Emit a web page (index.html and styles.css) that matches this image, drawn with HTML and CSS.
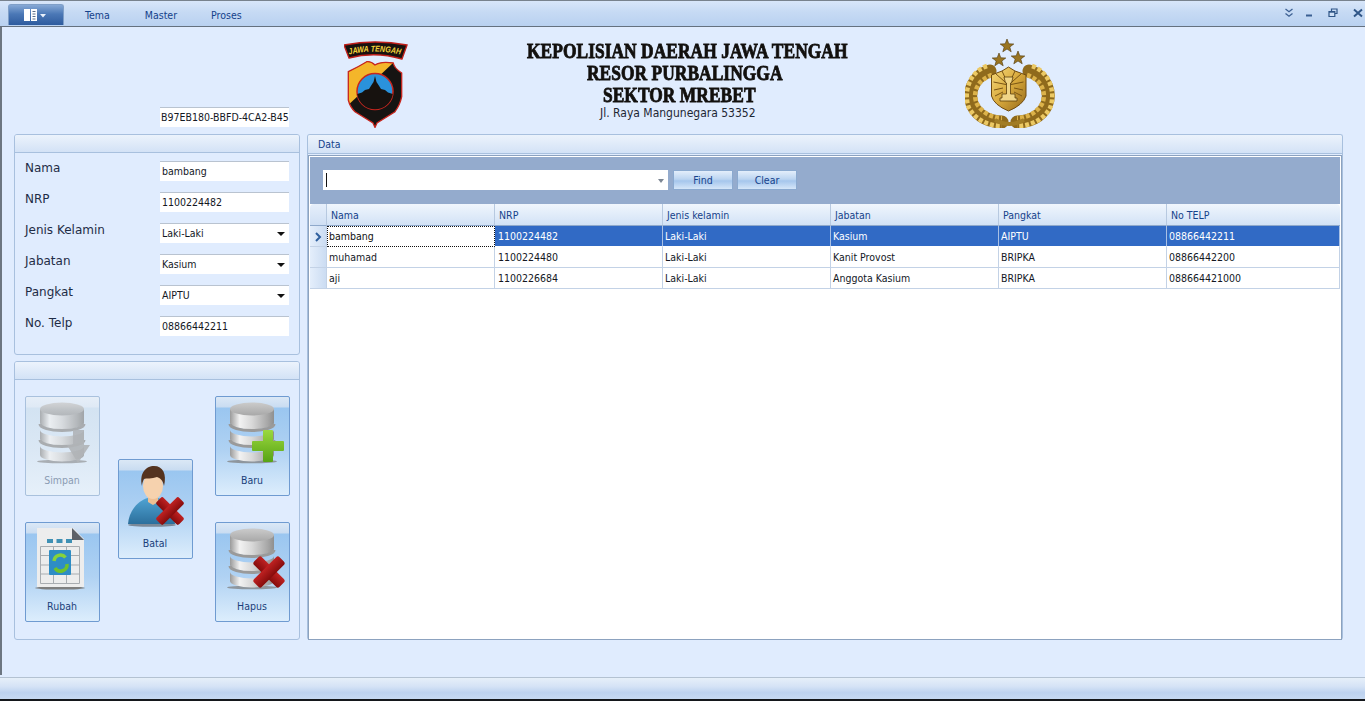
FILE: index.html
```html
<!DOCTYPE html>
<html lang="id">
<head>
<meta charset="utf-8">
<title>Data Anggota</title>
<link rel="stylesheet" href="styles.css">
</head>
<body>
<svg class="defs" width="0" height="0" aria-hidden="true">
  <defs>
    <linearGradient id="silver" x1="0" y1="0" x2="1" y2="0">
      <stop offset="0" stop-color="#9a9a9a"/><stop offset=".22" stop-color="#f2f2f2"/><stop offset=".5" stop-color="#d8d8d8"/><stop offset=".85" stop-color="#a8a8a8"/><stop offset="1" stop-color="#8f8f8f"/>
    </linearGradient>
    <linearGradient id="lid" x1="0" y1="0" x2="0" y2="1">
      <stop offset="0" stop-color="#cbcbcb"/><stop offset="1" stop-color="#a8a8a8"/>
    </linearGradient>
    <linearGradient id="red" x1="0" y1="0" x2="0" y2="1">
      <stop offset="0" stop-color="#c02222"/><stop offset="1" stop-color="#860c0c"/>
    </linearGradient>
    <linearGradient id="green" x1="0" y1="0" x2="0" y2="1">
      <stop offset="0" stop-color="#9bd83f"/><stop offset="1" stop-color="#57a314"/>
    </linearGradient>
    <linearGradient id="gold" x1="0" y1="0" x2="1" y2="1">
      <stop offset="0" stop-color="#f6da7c"/><stop offset=".5" stop-color="#d8a93c"/><stop offset="1" stop-color="#94681a"/>
    </linearGradient>
    <linearGradient id="cloth" x1="0" y1="0" x2="0" y2="1">
      <stop offset="0" stop-color="#4fa3d3"/><stop offset="1" stop-color="#2c6f9c"/>
    </linearGradient>
    <clipPath id="shield-clip">
      <path d="M31 25 Q27 21 22.700 21.700 Q14 27 4.300 31.700 L4.300 60 Q6 67 11 71.700 L29 83 L31 87.500 L33 83 L51 71.700 Q56 65 57.700 56.700 L57.700 33 Q50 28 49.300 23 Q37 21 31 25Z"/>
    </clipPath>
    <symbol id="db" viewBox="0 0 73 72">
      <ellipse cx="36" cy="64.500" rx="25" ry="1.800" fill="#7f7f7f" opacity=".75"/>
      <path d="M14 49A22 6.500 0 0 0 58 49V58A22 6.500 0 0 1 14 58Z" fill="url(#silver)"/>
      <path d="M14 33A22 6.500 0 0 0 58 33V42A22 6.500 0 0 1 14 42Z" fill="url(#silver)"/>
      <path d="M14 12V26A22 6.500 0 0 0 58 26V12Z" fill="url(#silver)"/>
      <path d="M14 27A22 6.500 0 0 0 58 27" fill="none" stroke="#9a9a9a" stroke-width="3"/>
      <path d="M14 43A22 6.500 0 0 0 58 43" fill="none" stroke="#9a9a9a" stroke-width="3"/>
      <ellipse cx="36" cy="12" rx="22" ry="6.500" fill="url(#lid)"/>
    </symbol>
    <symbol id="cross" viewBox="0 0 34 34">
      <g fill="url(#red)">
        <rect x="-1" y="11.500" width="36" height="11" rx="2.500" transform="rotate(45 17 17)"/>
        <rect x="-1" y="11.500" width="36" height="11" rx="2.500" transform="rotate(-45 17 17)"/>
      </g>
    </symbol>
  </defs>
</svg>

<div class="app">
  <header class="menubar">
    <button class="appbtn" type="button" aria-label="Menu aplikasi">
      <svg width="26" height="14" viewBox="0 0 26 14"><path d="M1 1H7V13H1Z" fill="#fff"/><path d="M8 1H14V13H8Z" fill="#fff"/><path d="M9.500 3.500H12.500M9.500 6H12.500M9.500 8.500H12.500M9.500 11H12.500" stroke="#5d6f86"/><path d="M17 6H23L20 9.500Z" fill="#e9f1fb"/></svg>
    </button>
    <nav class="tabs">
      <span class="tab">Tema</span>
      <span class="tab tab-master">Master</span>
      <span class="tab tab-proses">Proses</span>
    </nav>
    <div class="winctl">
      <svg width="10" height="10" viewBox="0 0 10 10"><path d="M1.500 1L5 3.700 8.500 1M1.500 5.500L5 8.200 8.500 5.500" fill="none" stroke="#3c5f92" stroke-width="1.300"/></svg>
      <svg class="wc-min" width="8" height="10" viewBox="0 0 8 10"><path d="M1 7.500H7" stroke="#3a5f92" stroke-width="2"/></svg>
      <svg class="wc-res" width="10" height="10" viewBox="0 0 10 10"><path d="M3.500 3V1H9V5.500H7" fill="none" stroke="#2f5587" stroke-width="1.200"/><path d="M1 3.500H6.800V8.500H1Z" fill="#cfe0f6" stroke="#2f5587" stroke-width="1.200"/><path d="M1 4H6.800" stroke="#2f5587" stroke-width="1.400"/></svg>
      <svg class="wc-x" width="10" height="10" viewBox="0 0 10 10"><path d="M1 1.500L9 8.500M9 1.500L1 8.500" stroke="#2f5587" stroke-width="2"/></svg>
    </div>
  </header>

  <main class="main">
    <section class="head">
      <div class="field idfield">B97EB180-BBFD-4CA2-B45</div>
      <svg class="logo" width="64" height="88" viewBox="0 0 64 88">
        <path d="M31 25 Q27 21 22.700 21.700 Q14 27 4.300 31.700 L4.300 60 Q6 67 11 71.700 L29 83 L31 87.500 L33 83 L51 71.700 Q56 65 57.700 56.700 L57.700 33 Q50 28 49.300 23 Q37 21 31 25Z" fill="#161412"/>
        <path d="M0 0H52V20L49 23 2 67 0 67Z" fill="#f4b62a" clip-path="url(#shield-clip)"/>
        <path d="M31 25 Q27 21 22.700 21.700 Q14 27 4.300 31.700 L4.300 60 Q6 67 11 71.700 L29 83 L31 87.500 L33 83 L51 71.700 Q56 65 57.700 56.700 L57.700 33 Q50 28 49.300 23 Q37 21 31 25Z" fill="none" stroke="#c8261e" stroke-width="1.300"/>
        <circle cx="31" cy="51.500" r="18" fill="#2a92dc" stroke="#c8261e" stroke-width="1.500"/>
        <path d="M13.200 54L18 52.500 21 50 25 49 27.500 45 29.500 42 31 36 32.500 42 34.500 45 37 49 41 50 44 52.500 48.800 54A18 18 0 0 1 13.200 54Z" fill="#17120f"/>
        <path d="M0 5Q31 -1 63 5L58 19Q31 11 5 18Z" fill="#17120f" stroke="#bf1f1a" stroke-width="1.400"/>
        <path id="banner-text" d="M5 14.500Q31 8.500 58 15" fill="none"/>
        <text class="logotext"><textPath href="#banner-text" textLength="52" lengthAdjust="spacingAndGlyphs">JAWA TENGAH</textPath></text>
      </svg>
      <div class="title">
        <div class="t-line t1">KEPOLISIAN DAERAH JAWA TENGAH</div>
        <div class="t-line t2">RESOR PURBALINGGA</div>
        <div class="t-line t3">SEKTOR MREBET</div>
        <div class="addr">Jl. Raya Mangunegara 53352</div>
      </div>
      <svg class="emblem" width="90" height="90" viewBox="0 0 90 90">
        <g fill="#9a7522" stroke="#4d3608" stroke-width=".6">
          <path d="M42 1L43.800 5.800 48.800 6 44.800 9 46.200 13.800 42 11 37.800 13.800 39.200 9 35.200 6 40.200 5.800Z"/>
          <path d="M34 15L35.800 19.800 40.800 20 36.800 23 38.200 27.800 34 25 29.800 27.800 31.200 23 27.200 20 32.200 19.800Z"/>
          <path d="M53 13L54.800 17.800 59.800 18 55.800 21 57.200 25.800 53 23 48.800 25.800 50.200 21 46.200 18 51.200 17.800Z"/>
        </g>
        <g fill="none">
          <path d="M25 33C8 38 2 55 8 68C13 78 24 84 37 84" stroke="#8f6a1c" stroke-width="13" stroke-linecap="round"/>
          <path d="M64 33C81 38 87 55 81 68C76 78 65 84 52 84" stroke="#8f6a1c" stroke-width="13" stroke-linecap="round"/>
          <path d="M22 28C4 34 -2 55 4 70C10 81 23 88 37 88" stroke="#ecc964" stroke-width="4.500" stroke-dasharray="4 2"/>
          <path d="M67 28C85 34 91 55 85 70C79 81 66 88 52 88" stroke="#ecc964" stroke-width="4.500" stroke-dasharray="4 2"/>
          <path d="M27 37C12 42 7 55 12 66C17 74 26 80 37 80" stroke="#dcb24a" stroke-width="4.500" stroke-dasharray="4 2"/>
          <path d="M62 37C77 42 82 55 77 66C72 74 63 80 52 80" stroke="#dcb24a" stroke-width="4.500" stroke-dasharray="4 2"/>
          <path d="M30 82Q44 90 59 82" stroke="#a17c25" stroke-width="4"/>
        </g>
        <path d="M43.500 29L50 33 61 37V58Q58 67 43.500 73Q29 67 26.500 58V37L37 33Z" fill="url(#gold)" stroke="#6f4b10" stroke-width="1"/>
        <g stroke="#7a5514" stroke-width="1" fill="none">
          <path d="M43.500 47L31 36M43.500 47L37 33M43.500 47L50 33M43.500 47L56 36M43.500 47L28.500 44M43.500 47L58.500 44"/>
          <path d="M29 52L38 50M58 52L49 50M30 58L38 54M57 58L49 54"/>
        </g>
        <path d="M39 39H48L46.500 45H45.500V56H50V60H52V63H35V60H37V56H41.500V45H40.500Z" fill="#f0d586" stroke="#5c3f0c" stroke-width=".8"/>
      </svg>
    </section>

    <section class="body">
      <div class="leftcol">
        <div class="panel formpanel">
          <div class="panelhead"></div>
          <div class="form">
            <label class="lbl">Nama</label><div class="field">bambang</div>
            <label class="lbl">NRP</label><div class="field">1100224482</div>
            <label class="lbl">Jenis Kelamin</label><div class="field select">Laki-Laki</div>
            <label class="lbl">Jabatan</label><div class="field select">Kasium</div>
            <label class="lbl">Pangkat</label><div class="field select">AIPTU</div>
            <label class="lbl">No. Telp</label><div class="field">08866442211</div>
          </div>
        </div>
        <div class="panel actionpanel">
          <div class="panelhead"></div>
          <div class="actions">
            <div class="actcol">
              <button class="bigbtn disabled" type="button">
                <svg class="ico" viewBox="0 0 73 72"><use href="#db"/><path d="M47 33H58V48H64L52 66 41 48H47Z" fill="#a3a3a3" opacity=".9"/></svg>
                <span>Simpan</span>
              </button>
              <button class="bigbtn" type="button">
                <svg class="ico" viewBox="0 0 73 72">
                  <ellipse cx="34" cy="65" rx="25" ry="1.600" fill="#7f7f7f"/>
                  <path d="M11 5H47L58 16V64H11Z" fill="#ededed"/>
                  <path d="M46 5L58 17H46Z" fill="#5d6168"/>
                  <path d="M21 18H27M30.500 18H36.500M40 18H46" stroke="#3f90b4" stroke-width="4"/>
                  <path d="M14.500 23.500H53.500V60.500H14.500ZM14.500 32.500H53.500M14.500 42H53.500M14.500 51H53.500M27.500 23.500V60.500M40.500 23.500V60.500" fill="none" stroke="#a9adb1"/>
                  <rect x="23" y="27" width="22" height="25" rx="1" fill="#2e8dc5"/>
                  <path d="M28 38A6.500 6.500 0 0 1 39.500 34.500" fill="none" stroke="#86d33b" stroke-width="3.500"/>
                  <path d="M41 41A6.500 6.500 0 0 1 29 45" fill="none" stroke="#6fc22c" stroke-width="3.500"/>
                </svg>
                <span>Rubah</span>
              </button>
            </div>
            <div class="actcol mid">
              <button class="bigbtn" type="button">
                <svg class="ico" viewBox="0 0 73 72">
                  <ellipse cx="33" cy="65" rx="24" ry="1.800" fill="#7b8998"/>
                  <path d="M9 64C10 50 20 40 29 38H39C48 40 55 50 56 64Z" fill="url(#cloth)"/>
                  <path d="M29 34H39V42L34 45 29 42Z" fill="#eebf93"/>
                  <ellipse cx="34" cy="26" rx="10" ry="13" fill="#f6d2ae"/>
                  <path d="M23 26C20 13 27 6 35 6C44 6 48 14 45 26C44 20 41 18 38 17C33 19 27 18 25 19C24 21 23 23 23 26Z" fill="#54331f"/>
                  <use href="#cross" x="36" y="36" width="30" height="30"/>
                </svg>
                <span>Batal</span>
              </button>
            </div>
            <div class="actcol">
              <button class="bigbtn" type="button">
                <svg class="ico" viewBox="0 0 73 72"><use href="#db"/><path d="M47 34Q47 33 48 33H56Q57 33 57 34V44H67Q68 44 68 45V53Q68 54 67 54H57V64Q57 65 56 65H48Q47 65 47 64V54H37Q36 54 36 53V45Q36 44 37 44H47Z" fill="url(#green)"/></svg>
                <span>Baru</span>
              </button>
              <button class="bigbtn" type="button">
                <svg class="ico" viewBox="0 0 73 72"><use href="#db"/><use href="#cross" x="36" y="32" width="34" height="34"/></svg>
                <span>Hapus</span>
              </button>
            </div>
          </div>
        </div>
      </div>

      <div class="panel datapanel">
        <div class="panelhead datahead">Data</div>
        <div class="frame">
          <div class="searchbar">
            <div class="combo"><i class="caret"></i><i class="comboarrow"></i></div>
            <button class="sbtn" type="button">Find</button>
            <button class="sbtn" type="button">Clear</button>
          </div>
          <table class="grid">
            <colgroup>
              <col class="c-ind"><col class="c-col"><col class="c-col"><col class="c-col"><col class="c-col"><col class="c-col"><col>
            </colgroup>
            <thead>
              <tr><th></th><th>Nama</th><th>NRP</th><th>Jenis kelamin</th><th>Jabatan</th><th>Pangkat</th><th>No TELP</th></tr>
            </thead>
            <tbody>
              <tr class="sel">
                <td class="ind"><svg width="8" height="10" viewBox="0 0 8 10"><path d="M2 1L6 5 2 9" fill="none" stroke="#2f5f9e" stroke-width="2"/></svg></td>
                <td class="focus">bambang</td><td>1100224482</td><td>Laki-Laki</td><td>Kasium</td><td>AIPTU</td><td>08866442211</td>
              </tr>
              <tr><td class="ind"></td><td>muhamad</td><td>1100224480</td><td>Laki-Laki</td><td>Kanit Provost</td><td>BRIPKA</td><td>08866442200</td></tr>
              <tr><td class="ind"></td><td>aji</td><td>1100226684</td><td>Laki-Laki</td><td>Anggota Kasium</td><td>BRIPKA</td><td>088664421000</td></tr>
            </tbody>
          </table>
        </div>
      </div>
    </section>
  </main>

  <footer class="status"></footer>
</div>
</body>
</html>
```

FILE: styles.css
```css
* { box-sizing: border-box; }
html, body { margin: 0; padding: 0; height: 100%; overflow: hidden; }
body { font-family: "DejaVu Sans", Verdana, sans-serif; font-stretch: condensed; font-size: 10.500px; color: #111; background: #e0ecfe; }
.defs { position: absolute; }
button { font-family: inherit; font-size: inherit; font-stretch: inherit; margin: 0; padding: 0; cursor: default; }

.app { display: flex; flex-direction: column; width: 1365px; height: 701px; background: #e0ecfe; }

/* ribbon */
.menubar {
  flex: none; height: 27px; display: flex; align-items: flex-start;
  border-top: 1px solid #78828d; border-bottom: 1px solid #65717f;
  background: linear-gradient(#d8e6f9, #c6daf4 45%, #b9d1f0);
}
.appbtn {
  width: 56px; height: 21px; margin: 3px 0 0 8px; border: 1px solid #7f9fc8; border-bottom: 0;
  border-radius: 3px 3px 0 0; background: linear-gradient(#86a9d6, #4b78b6 45%, #2e5b9e);
  display: flex; align-items: center; justify-content: center;
}
.tabs { display: flex; margin-left: 21px; height: 25px; align-items: center; color: #15428b; }
.tab { padding-top: 3px; }
.tab-master { margin-left: 35px; }
.tab-proses { margin-left: 34px; }
.winctl { margin-left: auto; display: flex; align-items: center; height: 25px; padding: 0 2px 2px 0; }
.wc-min { margin-left: 11px; }
.wc-res { margin-left: 15px; }
.wc-x { margin-left: 15px; }

/* main */
.main { flex: none; height: 648px; border-left: 2px solid #6d7681; display: flex; flex-direction: column; }

.head { flex: none; height: 107px; display: flex; align-items: flex-end; padding-bottom: 6px; }
.field.idfield { margin: 0 0 1px 158px; white-space: nowrap; overflow: hidden; padding-left: 1px; }
.logo { margin-left: 55px; flex: none; }
.logotext { font: italic bold 8.500px "Liberation Sans", Arial, sans-serif; fill: #f7d43a; }
.title { align-self: flex-start; width: 438px; margin: 13px 0 0 119px; flex: none; position: relative; }
.t-line {
  font-family: "Liberation Serif", "Times New Roman", serif; font-weight: 700; font-stretch: normal; font-size: 17.400px; letter-spacing: .05px;
  height: 22px; line-height: 22px; color: #12100e; white-space: nowrap; transform: scaleY(1.18); transform-origin: 0 50%;
  -webkit-text-stroke: .7px #12100e;
}
.t2 { padding-left: 60px; }
.t3 { padding-left: 76px; }
.addr { padding-left: 73px; font-size: 12px; line-height: 14px; color: #1d2633; }
.emblem { flex: none; }

.body { flex: none; height: 506px; display: flex; gap: 7px; padding-left: 12px; }
.leftcol { width: 286px; display: flex; flex-direction: column; gap: 6px; flex: none; }

.panel { border: 1px solid #a8c0de; border-radius: 3px; background: #e0ecfe; }
.panelhead { height: 18px; border-bottom: 1px solid #a8c0de; background: linear-gradient(#ecf3fc, #d3e2f6); border-radius: 2px 2px 0 0; }

.formpanel { height: 221px; }
.form { display: grid; grid-template-columns: 135px 129px; grid-auto-rows: 20px; row-gap: 11px; padding: 8px 0 0 10px; align-items: start; }
.lbl { font-stretch: normal; font-size: 12px; line-height: 14px; color: #1f2c46; }
.field {
  width: 129px; height: 20px; line-height: 18px; background: #fff; padding-left: 2px; color: #14181f;
  border-top: 1px solid #b9c3d0; position: relative;
}
.field.select::after {
  content: ""; position: absolute; right: 4px; top: 8px;
  border-left: 4px solid transparent; border-right: 4px solid transparent; border-top: 4px solid #111;
}

.actionpanel { height: 279px; }
.actions { display: flex; height: 226px; margin-top: 16px; padding-left: 10px; }
.actcol { display: flex; flex-direction: column; justify-content: space-between; width: 75px; }
.actcol.mid { justify-content: center; margin: 0 22px 0 18px; }
.bigbtn {
  width: 75px; height: 100px; border: 1px solid #6f9bd1; border-radius: 2px;
  background: linear-gradient(#dbe8f6, #c9dcf1 10px, #9ac6f0 11px, #b0d2f3 55%, #dcedfc);
  display: flex; flex-direction: column; align-items: center; color: #1b3f7a;
}
.ico { display: block; width: 73px; height: 72px; flex: none; }
.bigbtn span { line-height: 14px; margin-top: 4px; padding-right: 1px; }
.bigbtn.disabled { border-color: #a9c1dd; background: linear-gradient(#e6eef8, #dfe9f5 10px, #d3e3f2 11px, #dbe8f5 55%, #e6f0fa); color: #8b9cb3; }
.bigbtn.disabled .ico { opacity: .75; filter: grayscale(1); }

.datapanel { width: 1036px; flex: none; border-bottom: 0; display: flex; flex-direction: column; }
.datahead { height: 19px; line-height: 19px; padding-left: 10px; color: #15428b; flex: none; }
.frame { flex: 1; margin: 1px 0 0 0; border: 1px solid #8ca2bf; padding: 1px; background: #fff; display: flex; flex-direction: column; }
.searchbar { flex: none; height: 47px; background: #94abcd; display: flex; align-items: flex-start; padding: 13px 0 0 13px; }
.combo { width: 345px; height: 20px; background: #fff; position: relative; }
.caret { position: absolute; left: 3px; top: 3px; width: 1px; height: 14px; background: #111; }
.comboarrow { position: absolute; right: 4px; top: 9px; border-left: 3px solid transparent; border-right: 3px solid transparent; border-top: 4px solid #7d8794; }
.sbtn {
  width: 60px; height: 20px; margin-left: 5px; border: 1px solid #8aa9cf; border-radius: 1px; color: #15428b;
  background: linear-gradient(#e3eefb, #bcd5f1 45%, #a5c6ec 55%, #d5e6f8);
}
.sbtn + .sbtn { margin-left: 4px; }

.grid { width: 1030px; table-layout: fixed; border-collapse: separate; border-spacing: 0; }
.c-ind { width: 17px; }
.c-col { width: 168px; }
.grid th {
  height: 22px; padding: 0 0 0 4px; text-align: left; font-weight: 400; color: #15428b;
  background: linear-gradient(#f0f6fd, #d2e2f6); border-right: 1px solid #b7c9e0; border-bottom: 1px solid #8fa9cb;
}
.grid th:first-child { background: linear-gradient(#e6effb, #cfdff4); border-top-left-radius: 4px; }
.grid th:last-child { border-right: 0; border-top-right-radius: 4px; }
.grid td {
  height: 21px; padding: 0 0 0 2px; white-space: nowrap; overflow: hidden; background: #fff; color: #14181f;
  border-right: 1px solid #c3d2e6; border-bottom: 1px solid #c3d2e6;
}
.grid td:nth-child(3) { padding-left: 3px; }
.grid td.ind { padding: 0; text-align: center; background: linear-gradient(90deg, #e4eefb, #cbdcf2); }
.ind svg { display: block; margin: 1px auto 0; }
.grid tr.sel td { background: #316ac5; color: #fff; border-right-color: #a9c0e4; border-bottom-color: #fff; }
.grid tr.sel td.ind { background: linear-gradient(90deg, #e4eefb, #cbdcf2); border-right-color: #c3d2e6; border-bottom-color: #c3d2e6; }
.grid tr.sel td.focus { background: #fff; color: #111; outline: 1px dotted #111; outline-offset: -1px; border-right-color: #fff; }

.status {
  flex: none; height: 24px; margin-top: 2px; border-top: 1px solid #b4c2d2; border-bottom: 2px solid #14171b;
  background: linear-gradient(#e6eff9, #d5e3f6 40%, #bdd2ef 70%, #c6d9f2);
}
```
